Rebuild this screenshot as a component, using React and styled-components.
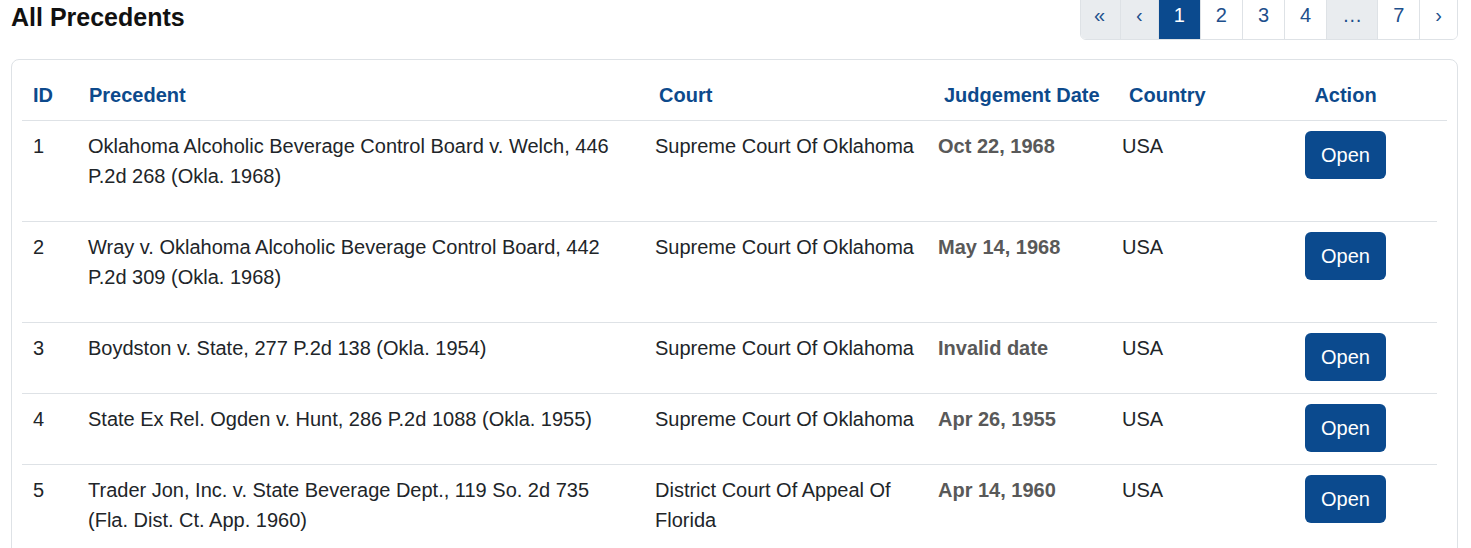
import styled, { createGlobalStyle } from "styled-components";

const GlobalStyle = createGlobalStyle`
body {
    margin: 0;
    background: #fff;
    font-family: "Liberation Sans", Arial, sans-serif;
    color: #212529;
}
`

const Page = styled.div`
padding: 0 13px 0 11px;
overflow: hidden;
height: 548px;
`

const TopBar = styled.div`
display: flex;
justify-content: space-between;
align-items: flex-start;
height: 38px;
margin-bottom: 21px;
h2 {
    margin: 0;
    font-size: 25px;
    line-height: 34px;
    font-weight: bold;
    color: #111;
}
`

const Pagination = styled.ul`
display: flex;
list-style: none;
margin: -10px 0 0 0;
padding: 0;
border: 1px solid #dee2e6;
border-radius: 6px;
overflow: hidden;
`

const PageItem = styled.li`
padding: 9px 15px;
font-size: 20px;
line-height: 30px;
border-left: ${p => p.$first ? "none" : "1px solid #dee2e6"};
background: ${p => p.$active ? "#0b4a8e" : p.$disabled ? "#e9ecef" : "#fff"};
color: ${p => p.$active ? "#fff" : "#1d4f8c"};
&:first-child {
    padding-left: 13px;
}
`

const Card = styled.div`
border: 1px solid #dee2e6;
border-radius: 8px;
padding: 10px;
`

const HeadRow = styled.div`
display: grid;
grid-template-columns: 56px 570px 285px 185px 126px 1fr;
border-bottom: 1px solid #dee2e6;
`

const HeadCell = styled.div`
padding: 10px 11px;
font-size: 20px;
line-height: 30px;
font-weight: bold;
color: #0d4a8c;
text-align: ${p => p.$center ? "center" : "left"};
`

const Row = styled.div`
display: grid;
grid-template-columns: 55px 567px 283px 184px 143px 1fr;
margin-right: 10px;
border-bottom: 1px solid #dee2e6;
`

const Cell = styled.div`
padding: 10px 11px;
font-size: 20px;
line-height: 30px;
text-align: ${p => p.$center ? "center" : "left"};
p {
    margin: 0 0 20px 0;
}
`

const DateText = styled.p`
font-weight: bold;
color: #595959;
`

const OpenButton = styled.button`
font-family: "Liberation Sans", Arial, sans-serif;
font-size: 20px;
line-height: 30px;
padding: 9px 16px;
border: none;
border-radius: 6px;
background: #0b4a8e;
color: #fff;
`

const precedents = [
    { id: 1, name: "Oklahoma Alcoholic Beverage Control Board v. Welch, 446 P.2d 268 (Okla. 1968)", court: "Supreme Court Of Oklahoma", date: "Oct 22, 1968", country: "USA" },
    { id: 2, name: "Wray v. Oklahoma Alcoholic Beverage Control Board, 442 P.2d 309 (Okla. 1968)", court: "Supreme Court Of Oklahoma", date: "May 14, 1968", country: "USA" },
    { id: 3, name: "Boydston v. State, 277 P.2d 138 (Okla. 1954)", court: "Supreme Court Of Oklahoma", date: "Invalid date", country: "USA" },
    { id: 4, name: "State Ex Rel. Ogden v. Hunt, 286 P.2d 1088 (Okla. 1955)", court: "Supreme Court Of Oklahoma", date: "Apr 26, 1955", country: "USA" },
    { id: 5, name: "Trader Jon, Inc. v. State Beverage Dept., 119 So. 2d 735 (Fla. Dist. Ct. App. 1960)", court: "District Court Of Appeal Of Florida", date: "Apr 14, 1960", country: "USA" },
]

const pages = [
    { label: "«", disabled: true },
    { label: "‹", disabled: true },
    { label: "1", active: true },
    { label: "2" },
    { label: "3" },
    { label: "4" },
    { label: "…", disabled: true },
    { label: "7" },
    { label: "›" },
]

function App() {
    const listPages = pages.map((page, index) => {
        return <PageItem key={index} $first={index === 0} $active={page.active} $disabled={page.disabled}>{page.label}</PageItem>
    })

    const listRows = precedents.map((item) => {
        return (
            <Row key={item.id}>
                <Cell><p>{item.id}</p></Cell>
                <Cell><p>{item.name}</p></Cell>
                <Cell><p>{item.court}</p></Cell>
                <Cell><DateText>{item.date}</DateText></Cell>
                <Cell><p>{item.country}</p></Cell>
                <Cell $center><OpenButton>Open</OpenButton></Cell>
            </Row>
        )
    })

    return (
        <Page>
            <GlobalStyle />
            <TopBar>
                <h2>All Precedents</h2>
                <Pagination>{listPages}</Pagination>
            </TopBar>

            <Card>
                <HeadRow>
                    <HeadCell>ID</HeadCell>
                    <HeadCell>Precedent</HeadCell>
                    <HeadCell>Court</HeadCell>
                    <HeadCell>Judgement Date</HeadCell>
                    <HeadCell>Country</HeadCell>
                    <HeadCell $center>Action</HeadCell>
                </HeadRow>
                {listRows}
            </Card>
        </Page>
    )
}

export default App
